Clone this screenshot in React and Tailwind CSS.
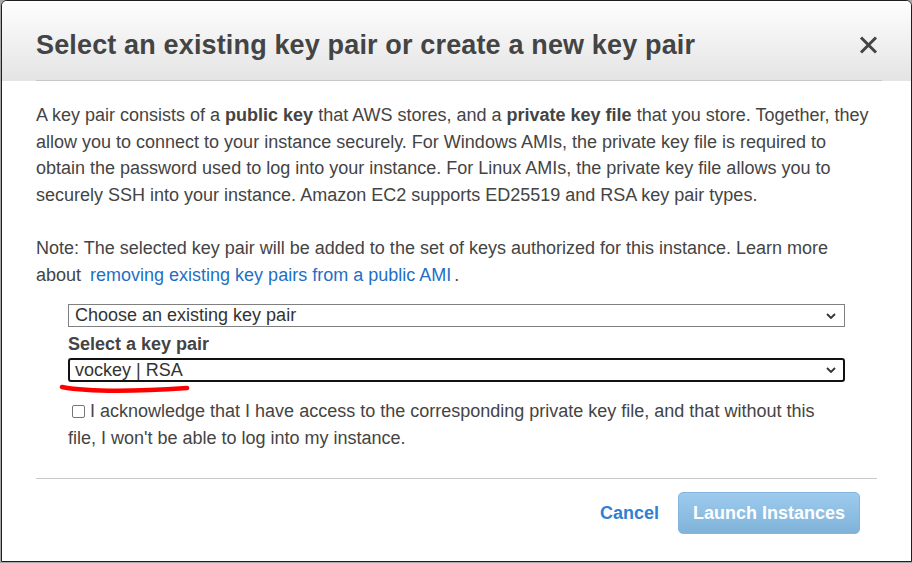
import React from "react";

function Chevron() {
  return (
    <svg width="10" height="6" viewBox="0 0 10 6" className="shrink-0">
      <path d="M1 1 L5 5 L9 1" fill="none" stroke="#333" strokeWidth="1.8" />
    </svg>
  );
}

export default function App() {
  return (
    <div className="w-[912px] h-[563px] bg-[#a8a8a8] pl-[1px] pb-[1px] overflow-hidden" style={{ fontFamily: '"Liberation Sans", Arial, sans-serif' }}>
      <div className="h-full flex flex-col bg-white border border-[#1e1e1e] rounded-t-[6px] overflow-hidden">
        <div className="h-[80px] shrink-0 bg-gradient-to-b from-[#fefefe] to-[#e4e4e4] flex items-center justify-between pl-[34px] pr-[33px] pt-[8px] relative">
          <h1 className="text-[27px] font-bold text-[#444] tracking-[0.15px] leading-none">
            Select an existing key pair or create a new key pair
          </h1>
          <svg width="19" height="18" viewBox="0 0 19 18" className="shrink-0">
            <path d="M2 1.5 L17 16.5 M17 1.5 L2 16.5" stroke="#444" strokeWidth="3" />
          </svg>
          <div className="absolute left-[34px] right-[29px] bottom-0 h-[1px] bg-[#c8c8c8]" />
        </div>
        <div className="flex-1 flex flex-col px-[34px] pt-[21px] text-[18px] leading-[26.5px] text-[#444]">
          <p>
            A key pair consists of a <b>public key</b> that AWS stores, and a <b>private key file</b> that you store. Together, they allow you to connect to your instance securely. For Windows AMIs, the private key file is required to obtain the password used to log into your instance. For Linux AMIs, the private key file allows you to securely SSH into your instance. Amazon EC2 supports ED25519 and RSA key pair types.
          </p>
          <p className="mt-[27px]">
            Note: The selected key pair will be added to the set of keys authorized for this instance. Learn more about <a className="text-[#1f6fc5] ml-[4px] mr-[3px]">removing existing key pairs from a public AMI</a>.
          </p>
          <div className="mx-[32px] mt-[16px] flex flex-col">
            <div className="h-[23px] border border-[#808080] flex items-center justify-between pl-[6px] pr-[8px] text-[#333]">
              <span>Choose an existing key pair</span>
              <Chevron />
            </div>
            <div className="font-bold text-[#444] mt-[3px] h-[28px] leading-[28px]">Select a key pair</div>
            <div className="relative h-[24px] border-2 border-[#111] rounded-[3px] flex items-center justify-between pl-[5px] pr-[7px] text-[#333]">
              <span>vockey | RSA</span>
              <Chevron />
              <svg className="absolute left-[-11px] top-[22px]" width="134" height="14" viewBox="0 0 134 14">
                <path d="M3 5 C 30 10, 70 10, 128 6" fill="none" stroke="#ff0000" strokeWidth="4.5" strokeLinecap="round" />
              </svg>
            </div>
            <p className="mt-[16px] leading-[27px]">
              <span className="inline-block w-[13px] h-[13px] border border-[#767676] rounded-[2px] bg-white align-[-1px] ml-[4px] mr-[5px]" />
              I acknowledge that I have access to the corresponding private key file, and that without this file, I won't be able to log into my instance.
            </p>
          </div>
          <div className="mt-[26px] h-[1px] bg-[#c8c8c8]" />
          <div className="flex items-center justify-end gap-[19px] mt-[13px] pr-[17px]">
            <span className="font-bold text-[#2f7fd6]">Cancel</span>
            <div className="h-[42px] w-[182px] rounded-[5px] border border-[#84b5dc] bg-gradient-to-b from-[#9dcbee] to-[#80b3d9] flex items-center justify-center text-white font-bold">
              Launch Instances
            </div>
          </div>
        </div>
      </div>
    </div>
  );
}
